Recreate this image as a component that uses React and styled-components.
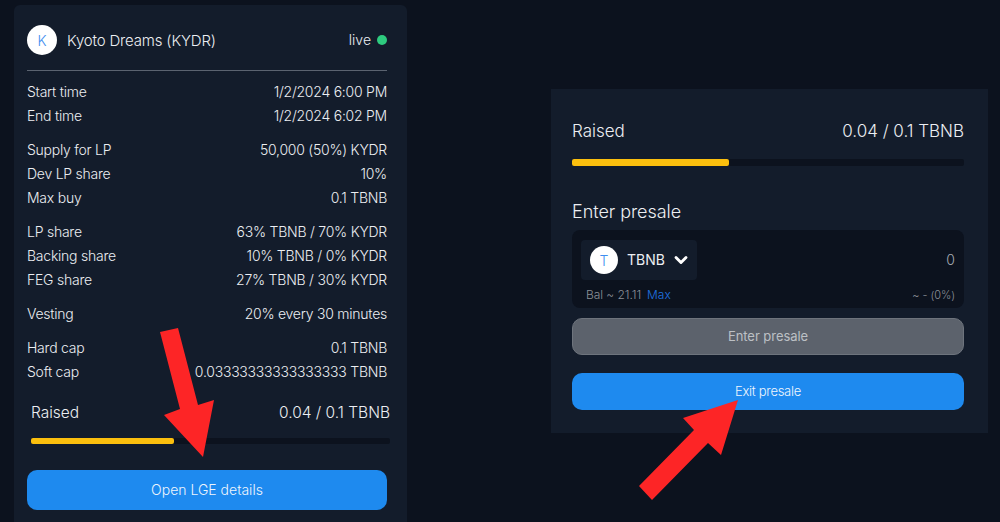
import React from "react";
import styled, { createGlobalStyle } from "styled-components";
import { ChevronDown } from "lucide-react";

const GlobalStyle = createGlobalStyle`
  html, body {
    margin: 0;
    background: #0c121e;
    overflow: hidden;
  }
`;

const Page = styled.div`
  position: relative;
  display: flex;
  align-items: flex-start;
  width: 1000px;
  height: 522px;
  overflow: hidden;
  background: #0c121e;
  color: #eceef2;
  font-family: Inter, "Noto Sans", sans-serif;
  font-size: 14px;
  font-weight: 300;
`;

const DetailsCard = styled.section`
  box-sizing: border-box;
  width: 393px;
  height: 530px;
  margin: 5px 0 0 14px;
  padding: 20px 20px 0 13px;
  background: #131c2b;
  border-radius: 6px;
`;

const PresaleCard = styled.section`
  box-sizing: border-box;
  width: 437px;
  height: 344px;
  margin: 89px 0 0 144px;
  padding: 30px 24px 0 21px;
  background: #131c2b;
`;

const TokenHeader = styled.header`
  display: flex;
  align-items: center;
  height: 30px;
  padding-bottom: 15px;
  border-bottom: 1px solid #5b6370;
  margin-bottom: 9px;
`;

const Avatar = styled.span`
  display: flex;
  align-items: center;
  justify-content: center;
  width: ${(p) => p.$size}px;
  height: ${(p) => p.$size}px;
  border-radius: 50%;
  background: #fff;
  color: #3f8ef0;
  font-size: 14px;
`;

const TokenName = styled.span`
  margin-left: 10px;
  font-size: 15px;
  letter-spacing: -0.17px;
`;

const Status = styled.span`
  display: flex;
  align-items: center;
  gap: 6px;
  margin: -1px 0 0 auto;
`;

const LiveDot = styled.span`
  width: 10px;
  height: 10px;
  border-radius: 50%;
  background: #2ecb7f;
`;

const Group = styled.div`
  margin-bottom: 10px;
`;

const Row = styled.div`
  display: flex;
  justify-content: space-between;
  height: 24px;
  line-height: 24px;
  letter-spacing: -0.24px;
`;

const RaisedBlock = styled.div`
  margin: 17px -3px 0 4px;
`;

const RaisedRow = styled.div`
  display: flex;
  justify-content: space-between;
  height: 24px;
  line-height: 24px;
  font-size: ${(p) => p.$size}px;
`;

const Track = styled.div`
  height: ${(p) => p.$height}px;
  margin-top: ${(p) => p.$top}px;
  background: #0c121e;
  border-radius: 2px;
`;

const Fill = styled.div`
  height: 100%;
  background: #fbbf0e;
  border-radius: 2px;
`;

const Button = styled.button`
  display: block;
  box-sizing: border-box;
  width: 100%;
  height: ${(p) => p.$height}px;
  border: 0;
  border-radius: 10px;
  background: #1e8aef;
  color: #eef5fd;
  font: inherit;
  font-size: ${(p) => p.$size}px;
`;

const DetailsButton = styled(Button)`
  margin-top: 26px;
  padding-bottom: 2px;
`;

const EnterButton = styled(Button)`
  margin-top: 10px;
  padding-bottom: 2px;
  border: 1px solid #6e747d;
  background: #5c626c;
  color: #bcc0c5;
  font-weight: 400;
  letter-spacing: -0.05px;
`;

const ExitButton = styled(Button)`
  margin-top: 18px;
  padding-bottom: 2px;
  letter-spacing: -0.3px;
`;

const SectionTitle = styled.h2`
  margin: 34px 0 6px;
  font-size: 18px;
  font-weight: 300;
  line-height: 24px;
  letter-spacing: -0.05px;
`;

const AmountBox = styled.div`
  box-sizing: border-box;
  height: 78px;
  padding: 10px 9px 0 9px;
  background: #0c121e;
  border-radius: 8px;
`;

const AmountRow = styled.div`
  display: flex;
  align-items: center;
  justify-content: space-between;
`;

const TokenSelect = styled.div`
  display: flex;
  align-items: center;
  box-sizing: border-box;
  width: 116px;
  height: 40px;
  padding-left: 9px;
  background: #131c2b;
  border-radius: 4px;
`;

const SelectLabel = styled.span`
  margin: -2px 6px 0 9px;
  font-size: 14px;
  font-weight: 400;
`;

const Amount = styled.span`
  color: #a5abb2;
  font-size: 14px;
  margin-top: -2px;
`;

const BalanceRow = styled.div`
  display: flex;
  justify-content: space-between;
  margin-top: 7px;
  padding: 0 0 0 5px;
  line-height: 16px;
  font-size: 12px;
  letter-spacing: -0.05px;
  color: #8b9098;
`;

const MaxLink = styled.a`
  margin-left: 6px;
  color: #1f73e0;
`;

const ShareText = styled.span`
  font-size: 11px;
`;

const Arrow = styled.svg`
  position: absolute;
  top: 0;
  left: 0;
  pointer-events: none;
`;

const groups = [
  [
    ["Start time", "1/2/2024 6:00 PM"],
    ["End time", "1/2/2024 6:02 PM"],
  ],
  [
    ["Supply for LP", "50,000 (50%) KYDR"],
    ["Dev LP share", "10%"],
    ["Max buy", "0.1 TBNB"],
  ],
  [
    ["LP share", "63% TBNB / 70% KYDR"],
    ["Backing share", "10% TBNB / 0% KYDR"],
    ["FEG share", "27% TBNB / 30% KYDR"],
  ],
  [["Vesting", "20% every 30 minutes"]],
  [
    ["Hard cap", "0.1 TBNB"],
    ["Soft cap", "0.03333333333333333 TBNB"],
  ],
];

const App = () => {
  return (
    <Page>
      <GlobalStyle />
      <DetailsCard>
        <TokenHeader>
          <Avatar $size={30}>K</Avatar>
          <TokenName>Kyoto Dreams (KYDR)</TokenName>
          <Status>
            live <LiveDot />
          </Status>
        </TokenHeader>
        {groups.map((rows) => (
          <Group key={rows[0][0]}>
            {rows.map(([label, value]) => (
              <Row key={label}>
                <span>{label}</span>
                <span>{value}</span>
              </Row>
            ))}
          </Group>
        ))}
        <RaisedBlock>
          <RaisedRow $size={15.5}>
            <span>Raised</span>
            <span>0.04 / 0.1 TBNB</span>
          </RaisedRow>
          <Track $top={13} $height={6}>
            <Fill style={{ width: "39.8%" }} />
          </Track>
        </RaisedBlock>
        <DetailsButton $height={40} $size={14}>
          Open LGE details
        </DetailsButton>
      </DetailsCard>

      <PresaleCard>
        <RaisedRow $size={17}>
          <span>Raised</span>
          <span>0.04 / 0.1 TBNB</span>
        </RaisedRow>
        <Track $top={16} $height={7}>
          <Fill style={{ width: "40%" }} />
        </Track>
        <SectionTitle>Enter presale</SectionTitle>
        <AmountBox>
          <AmountRow>
            <TokenSelect>
              <Avatar $size={28}>T</Avatar>
              <SelectLabel>TBNB</SelectLabel>
              <ChevronDown size={20} strokeWidth={3.5} color="#fff" />
            </TokenSelect>
            <Amount>0</Amount>
          </AmountRow>
          <BalanceRow>
            <span>
              Bal ~ 21.11
              <MaxLink>Max</MaxLink>
            </span>
            <ShareText>~ - (0%)</ShareText>
          </BalanceRow>
        </AmountBox>
        <EnterButton $height={37} $size={13}>
          Enter presale
        </EnterButton>
        <ExitButton $height={37} $size={13}>
          Exit presale
        </ExitButton>
      </PresaleCard>

      <Arrow width="1000" height="522" viewBox="0 0 1000 522">
        <polygon
          fill="#fd2526"
          points="160,332 178,328 198,405 214,400 203,457 164,415 180,409"
        />
        <polygon
          fill="#fd2526"
          points="738,400 683,418 694,430 639,486 652,500 708,443 721,455"
        />
      </Arrow>
    </Page>
  );
};

export default App;
